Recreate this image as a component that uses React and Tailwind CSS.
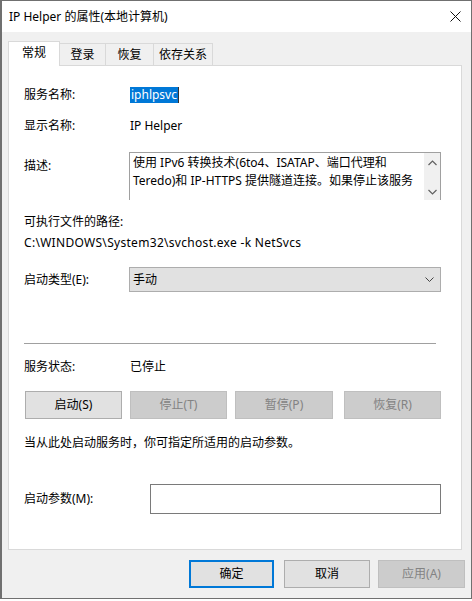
import React from 'react';

const font = { fontFamily: '"Noto Sans", "Noto Sans CJK SC", sans-serif' };

const Tab = ({ label, active, width }) =>
  active ? (
    <div className={`${width} h-[25px] bg-white border border-b-0 border-[#d9d9d9] flex items-center justify-center relative z-10 -mb-px`}>
      <span className="pb-[2px]">{label}</span>
    </div>
  ) : (
    <div className={`${width} h-[22px] bg-[#f0f0f0] border border-l-0 border-b-0 border-[#d9d9d9] flex items-center justify-center`}>
      {label}
    </div>
  );

const WinButton = ({ label, disabled, width, className = '' }) => (
  <div
    className={`${width} h-[28px] flex items-center justify-center border ${
      disabled ? 'bg-[#cccccc] border-[#bfbfbf] text-[#838383]' : 'bg-[#e1e1e1] border-[#adadad] text-black'
    } ${className}`}
  >
    {label}
  </div>
);

const Chevron = ({ up }) => (
  <svg width="9" height="6" viewBox="0 0 9 6" className="block">
    <path d={up ? 'M0.5 5 L4.5 1 L8.5 5' : 'M0.5 1 L4.5 5 L8.5 1'} fill="none" stroke="#606060" strokeWidth="1.2" />
  </svg>
);

export default function App() {
  return (
    <div className="w-[472px] h-[601px] bg-white text-[12px] text-black leading-none" style={font}>
      <div className="w-[472px] h-[599px] border border-[#707070] border-l-2 bg-[#f0f0f0] flex flex-col">
        {/* title bar */}
        <div className="h-[31px] bg-white flex items-center justify-between pl-[7px] pr-[10px]">
          <span>IP Helper 的属性(本地计算机)</span>
          <svg width="11" height="11" viewBox="0 0 11 11">
            <path d="M0.5 0.5 L10.5 10.5 M10.5 0.5 L0.5 10.5" stroke="#111" strokeWidth="1" />
          </svg>
        </div>

        {/* tabs */}
        <div className="flex items-end ml-[6px] mt-[9px]">
          <Tab label="常规" active width="w-[52px]" />
          <Tab label="登录" width="w-[46px]" />
          <Tab label="恢复" width="w-[48px]" />
          <Tab label="依存关系" width="w-[59px]" />
        </div>

        {/* panel */}
        <div className="ml-[6px] w-[454px] h-[485px] bg-white border border-[#d9d9d9] flex flex-col pl-[15px]">
          <div className="mt-[21px] h-[16px] flex items-center">
            <span className="w-[106px]">服务名称:</span>
            <span className="h-[16px] bg-[#0078d7] text-white flex items-center pl-[1px] pr-[1px] border-r border-[#333]">iphlpsvc</span>
          </div>

          <div className="mt-[15px] h-[16px] flex items-center">
            <span className="w-[106px]">显示名称:</span>
            <span>IP Helper</span>
          </div>

          <div className="mt-[18px] flex">
            <span className="w-[105px] pt-[8px]">描述:</span>
            <div className="w-[312px] h-[48px] border border-[#a0a0a0] border-b-0 flex">
              <div className="flex-1 pl-[3px] pt-[1px] leading-[18px] whitespace-nowrap overflow-hidden">
                <div>使用 IPv6 转换技术(6to4、ISATAP、端口代理和</div>
                <div>Teredo)和 IP-HTTPS 提供隧道连接。如果停止该服务</div>
              </div>
              <div className="w-[16px] bg-[#f0f0f0] flex flex-col items-center justify-between pt-[7px] pb-[5px]">
                <Chevron up />
                <Chevron />
              </div>
            </div>
          </div>

          <div className="mt-[14px] h-[16px] flex items-center">可执行文件的路径:</div>
          <div className="mt-[5px] h-[16px] flex items-center tracking-[0.3px]">C:\WINDOWS\System32\svchost.exe -k NetSvcs</div>

          <div className="mt-[16px] flex items-center">
            <span className="w-[105px]">启动类型(E):</span>
            <div className="w-[312px] h-[25px] bg-[#e1e1e1] border border-[#adadad] flex items-center justify-between pl-[3px] pr-[6px]">
              <span>手动</span>
              <svg width="9" height="5" viewBox="0 0 9 5">
                <path d="M0.5 0.5 L4.5 4.5 L8.5 0.5" fill="none" stroke="#444" strokeWidth="1" />
              </svg>
            </div>
          </div>

          <div className="mt-[51px] h-px bg-[#a0a0a0] mr-[25px]" />

          <div className="mt-[15px] h-[16px] flex items-center">
            <span className="w-[106px]">服务状态:</span>
            <span>已停止</span>
          </div>

          <div className="mt-[16px] flex">
            <WinButton label="启动(S)" width="w-[97px]" className="ml-[1px]" />
            <WinButton label="停止(T)" disabled width="w-[97px]" className="ml-[8px]" />
            <WinButton label="暂停(P)" disabled width="w-[98px]" className="ml-[8px]" />
            <WinButton label="恢复(R)" disabled width="w-[97px]" className="ml-[11px]" />
          </div>

          <div className="mt-[16px] h-[16px] flex items-center">当从此处启动服务时，你可指定所适用的启动参数。</div>

          <div className="mt-[33px] flex items-center">
            <span className="w-[126px]">启动参数(M):</span>
            <div className="w-[291px] h-[30px] border border-[#7a7a7a] bg-white" />
          </div>
        </div>

        {/* bottom buttons */}
        <div className="mt-[10px] flex pl-[187px]">
          <div className="w-[85px] h-[28px] flex items-center justify-center bg-[#e1e1e1] border-2 border-[#0078d7]">确定</div>
          <WinButton label="取消" width="w-[86px]" className="ml-[10px]" />
          <WinButton label="应用(A)" disabled width="w-[87px]" className="ml-[8px]" />
        </div>
      </div>
    </div>
  );
}
